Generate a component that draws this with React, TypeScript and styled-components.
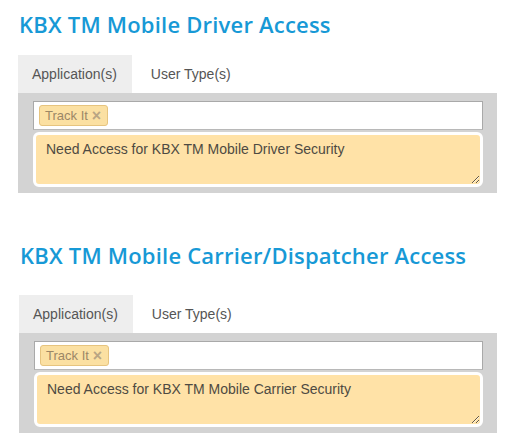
import React from "react";
import styled, { createGlobalStyle } from "styled-components";

const GlobalStyle = createGlobalStyle`
    body {
        margin: 0;
        background: #ffffff;
        font-family: "Liberation Sans", Arial, sans-serif;
    }
`
const Page = styled.div`
    padding: 9px 14px 0 18px;
    width: 479px;
`
const Section = styled.section<{ $top: number; $gap: number; $shift?: number }>`
    margin-top: ${props => props.$top}px;
    margin-left: ${props => props.$shift || 0}px;

    & > h2 {
        margin-bottom: ${props => props.$gap}px;
    }
`
const Title = styled.h2`
    margin: 0;
    padding-left: 1px;
    font-family: "Open Sans", sans-serif;
    font-weight: 600;
    font-size: 22px;
    line-height: 30px;
    letter-spacing: 0.2px;
    color: #1799d6;
    white-space: nowrap;
`
const Tabs = styled.ul`
    list-style: none;
    margin: 0;
    padding: 0;
    display: flex;
    gap: 5px;
`
const Tab = styled.li<{ $active?: boolean }>`
    height: 38px;
    line-height: 38px;
    padding: 0 15px 0 14px;
    font-size: 14px;
    color: #555555;
    background: ${props => (props.$active ? "#eeeeee" : "transparent")};
`
const Panel = styled.div`
    background: #d3d3d3;
    padding: 8px 14px 6px 15px;
    display: flex;
    flex-direction: column;
    gap: 2px;
`
const TagInput = styled.div`
    height: 27px;
    background: #ffffff;
    border: 1px solid #a9a9a9;
    border-bottom-color: #b8b8b8;
    display: flex;
    align-items: center;
    padding-left: 5px;
`
const Tag = styled.span`
    display: inline-flex;
    align-items: center;
    gap: 4px;
    height: 19px;
    padding: 0 6px 0 5px;
    background: #fbe0a2;
    border: 1px solid #e6c47f;
    border-radius: 3px;
    font-size: 13px;
    color: #9c8766;
`
const Remove = styled.span`
    font-size: 16px;
    font-weight: bold;
    line-height: 1;
    color: #b9a584;
`
const Note = styled.textarea`
    box-sizing: border-box;
    width: 100%;
    height: 55px;
    margin: 0;
    padding: 6px 10px;
    background: #ffe2a7;
    border: 3px solid #ffffff;
    border-radius: 6px;
    font-family: "Liberation Sans", Arial, sans-serif;
    font-size: 14px;
    line-height: 16px;
    color: #4e4a42;
    outline: none;
    display: block;
`

const AccessBlock = ({ title, note, top, gap, shift }: any) => {
    return (
        <Section $top={top} $gap={gap} $shift={shift}>
            <Title>{title}</Title>
            <Tabs>
                <Tab $active>Application(s)</Tab>
                <Tab>User Type(s)</Tab>
            </Tabs>
            <Panel>
                <TagInput>
                    <Tag>
                        Track It <Remove>×</Remove>
                    </Tag>
                </TagInput>
                <Note readOnly defaultValue={note} />
            </Panel>
        </Section>
    )
}

export default function App() {
    return (
        <Page>
            <GlobalStyle />
            <AccessBlock
                title="KBX TM Mobile Driver Access"
                note="Need Access for KBX TM Mobile Driver Security"
                top={0}
                gap={16}
            />
            <AccessBlock
                title="KBX TM Mobile Carrier/Dispatcher Access"
                note="Need Access for KBX TM Mobile Carrier Security"
                top={47}
                gap={25}
                shift={1}
            />
        </Page>
    )
}
